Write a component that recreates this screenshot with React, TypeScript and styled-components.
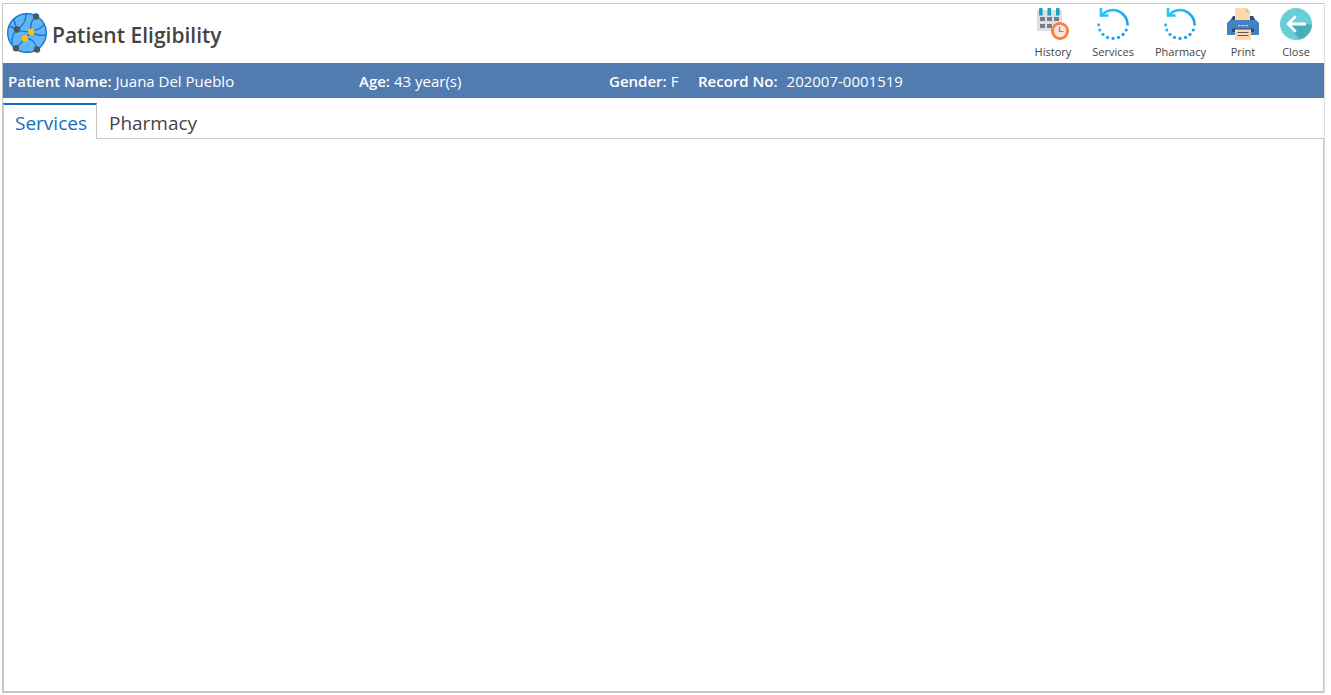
import React, { useState } from 'react';
import styled, { createGlobalStyle } from 'styled-components';

const GlobalStyle = createGlobalStyle`
  *, *::before, *::after { box-sizing: border-box; }
  html, body, #root { height: 100%; }
  body {
    margin: 0;
    background: #ffffff;
    color: #444444;
    font-family: 'Open Sans', 'Noto Sans', sans-serif;
  }
`;

const Page = styled.div`
  display: flex;
  height: 100%;
  padding: 3px 6px 2px 2px;
`;

const Frame = styled.main`
  display: flex;
  flex-direction: column;
  flex: 1;
  min-width: 0;
  border: 1px solid #c6c6c6;
  border-right-color: #dcdcdc;
`;

const Header = styled.header`
  display: flex;
  align-items: flex-start;
  justify-content: space-between;
  height: 59px;
  padding: 4px 12px 0 4px;
`;

const Brand = styled.div`
  display: flex;
  align-items: center;
  gap: 5px;
  padding-top: 5px;
`;

const Title = styled.h1`
  margin: 0;
  padding-top: 4px;
  font-size: 21px;
  line-height: 28px;
  font-weight: 600;
`;

const Toolbar = styled.nav`
  display: flex;
  gap: 21px;
`;

const ToolButton = styled.button`
  display: flex;
  flex-direction: column;
  align-items: center;
  gap: 4px;
  padding: 0;
  border: 0;
  background: none;
  color: #444444;
  font-family: inherit;
  font-size: 11px;
  line-height: 16px;
  cursor: pointer;
`;

const InfoBar = styled.dl`
  display: grid;
  grid-template-columns: 351px 250px 89px 1fr;
  align-items: center;
  height: 35px;
  margin: 0 0 5px;
  padding: 0 5px;
  background: #527bb0;
  color: #ffffff;
  font-size: 15px;
  line-height: 20px;
`;

const Field = styled.div<{ $wide?: boolean }>`
  display: flex;
  gap: ${({ $wide }) => ($wide ? 9 : 4)}px;
  white-space: nowrap;
`;

const Term = styled.dt`
  font-weight: 600;
`;

const Value = styled.dd`
  margin: 0;
`;

const TabList = styled.div`
  display: flex;
  height: 36px;
  margin-bottom: -1px;
`;

const Tab = styled.button<{ $active: boolean }>`
  position: relative;
  padding: 2px 9px 0 11px;
  border: 0;
  border-top: 2px solid ${({ $active }) => ($active ? '#106ebe' : 'transparent')};
  border-right: 1px solid ${({ $active }) => ($active ? '#c6c6c6' : 'transparent')};
  border-left: 1px solid ${({ $active }) => ($active ? '#c6c6c6' : 'transparent')};
  background: ${({ $active }) => ($active ? '#ffffff' : 'none')};
  color: ${({ $active }) => ($active ? '#106ebe' : '#444444')};
  font-family: inherit;
  font-size: 19px;
  line-height: 28px;
  cursor: pointer;
`;

const Panel = styled.section`
  flex: 1;
  border: 1px solid #c6c6c6;
`;

const GlobeLogo = () => (
  <svg width="40" height="40" viewBox="0 0 40 40" aria-hidden="true">
    <circle cx="20" cy="20" r="19.3" fill="#64b5f6" stroke="#1976d2" strokeWidth="1.4" />
    <g fill="none" stroke="#1976d2" strokeWidth="1.4">
      <path d="M19 1C19 8 16 13 10 16.5C6 20 4.5 25 5 31" />
      <path d="M7 6C7.5 10 8.5 13 10 16.5C14 19 19 19 24.3 18.8C30 17 35 15 37.5 11" />
      <path d="M2 13L10 16.5" />
      <path d="M29 3.5C23 8 23 14 24.3 18.8C29 22 34 23 39 22" />
      <path d="M24.3 18.8L18 25.5L9 35.2M18 25.5C25 25 29 30 30 36.5" />
    </g>
    <g fill="#455a64">
      <circle cx="29" cy="3.5" r="3.2" />
      <circle cx="10" cy="16.5" r="3.2" />
      <circle cx="9" cy="35.2" r="3.2" />
      <circle cx="30" cy="36.5" r="3.2" />
    </g>
    <g fill="#ffc107">
      <circle cx="24.3" cy="18.8" r="3.2" />
      <circle cx="18" cy="25.5" r="3.2" />
    </g>
  </svg>
);

const HistoryIcon = () => (
  <svg width="32" height="32" viewBox="0 0 32 32" aria-hidden="true">
    <path d="M0 2H25V23H0Z" fill="#dcdfe3" />
    <path
      d="M3 9h5v4H3zM10 9h5v4h-5zM17 9h5v4h-5zM3 16h5v4H3zM10 16h5v4h-5zM17 16h5v4h-5z"
      fill="#75808c"
    />
    <g fill="#16a5b8">
      <rect x="2" y="0" width="3.6" height="7.5" rx="0.6" />
      <rect x="10.5" y="0" width="3.6" height="7.5" rx="0.6" />
      <rect x="19" y="0" width="3.6" height="7.5" rx="0.6" />
    </g>
    <circle cx="23" cy="23" r="7.6" fill="#fae5de" stroke="#f77f39" strokeWidth="2.8" />
    <path d="M22.5 18.5V23.5H26.5" fill="none" stroke="#e5616a" strokeWidth="1.2" />
  </svg>
);

const RefreshIcon = ({ id }: { id: string }) => (
  <svg width="32" height="32" viewBox="0 0 32 32" aria-hidden="true">
    <defs>
      <linearGradient id={id} gradientUnits="userSpaceOnUse" x1="0" y1="0" x2="32" y2="32">
        <stop offset="0" stopColor="#2ccff5" />
        <stop offset="1" stopColor="#0a90f0" />
      </linearGradient>
    </defs>
    <g fill="none" stroke={`url(#${id})`} strokeWidth="2.6">
      <path d="M4.5 7.5A14.7 14.7 0 0 1 30.6 17.5" />
      <path d="M4 0V7.5H11.5" />
    </g>
    <g fill={`url(#${id})`}>
      <circle cx="1.6" cy="16.8" r="1.6" />
      <circle cx="2.8" cy="22" r="1.6" />
      <circle cx="6" cy="26.4" r="1.6" />
      <circle cx="10.5" cy="29.4" r="1.6" />
      <circle cx="16" cy="30.4" r="1.6" />
      <circle cx="21.5" cy="29.4" r="1.6" />
      <circle cx="26" cy="26.4" r="1.6" />
      <circle cx="29.2" cy="22" r="1.6" />
    </g>
  </svg>
);

const PrintIcon = () => (
  <svg width="32" height="32" viewBox="0 0 32 32" aria-hidden="true">
    <path d="M6 8H26L29 13H3Z" fill="#2b5078" />
    <path d="M8 0H19L23 4V12H8Z" fill="#ffd8ac" />
    <path d="M19 0V4H23Z" fill="#dcb98e" />
    <path d="M3 12H29L32 15V27H0V15Z" fill="#4482c3" />
    <path d="M11 17H13.5V18.2H11ZM14.5 17H17.5V18.2H14.5ZM18.5 17H21V18.2H18.5Z" fill="#b5d3f0" />
    <path d="M5 20.5H27V24H5Z" fill="#2b5078" />
    <path d="M8 21.5H24V32H8Z" fill="#ffd8ac" />
    <path d="M10.5 24.5H21.5M10.5 27.5H21.5" stroke="#5d5a58" strokeWidth="1" />
  </svg>
);

const CloseIcon = () => (
  <svg width="32" height="32" viewBox="0 0 32 32" aria-hidden="true">
    <circle cx="16" cy="16" r="16" fill="#66cfd8" />
    <path d="M7 17L20 31.5A16 16 0 0 0 32 17L25 15L15 17Z" fill="#4badb9" />
    <path
      d="M25 16H8M15 9L8 16L15 23"
      fill="none"
      stroke="#ffffff"
      strokeWidth="2.8"
      strokeLinecap="round"
      strokeLinejoin="round"
    />
  </svg>
);

const actions = [
  { label: 'History', icon: <HistoryIcon /> },
  { label: 'Services', icon: <RefreshIcon id="refresh-services" /> },
  { label: 'Pharmacy', icon: <RefreshIcon id="refresh-pharmacy" /> },
  { label: 'Print', icon: <PrintIcon /> },
  { label: 'Close', icon: <CloseIcon /> },
];

const fields = [
  { term: 'Patient Name:', value: 'Juana Del Pueblo' },
  { term: 'Age:', value: '43 year(s)' },
  { term: 'Gender:', value: 'F' },
  { term: 'Record No:', value: '202007-0001519', wide: true },
];

const tabs = ['Services', 'Pharmacy'];

export default function App() {
  const [active, setActive] = useState('Services');

  return (
    <Page>
      <GlobalStyle />
      <Frame>
        <Header>
          <Brand>
            <GlobeLogo />
            <Title>Patient Eligibility</Title>
          </Brand>
          <Toolbar aria-label="Actions">
            {actions.map(({ label, icon }) => (
              <ToolButton key={label} type="button">
                {icon}
                {label}
              </ToolButton>
            ))}
          </Toolbar>
        </Header>
        <InfoBar>
          {fields.map(({ term, value, wide }) => (
            <Field key={term} $wide={wide}>
              <Term>{term}</Term>
              <Value>{value}</Value>
            </Field>
          ))}
        </InfoBar>
        <TabList role="tablist">
          {tabs.map((tab) => (
            <Tab
              key={tab}
              type="button"
              role="tab"
              id={`tab-${tab}`}
              aria-selected={tab === active}
              aria-controls="tab-panel"
              $active={tab === active}
              onClick={() => setActive(tab)}
            >
              {tab}
            </Tab>
          ))}
        </TabList>
        <Panel id="tab-panel" role="tabpanel" aria-labelledby={`tab-${active}`} />
      </Frame>
    </Page>
  );
}
